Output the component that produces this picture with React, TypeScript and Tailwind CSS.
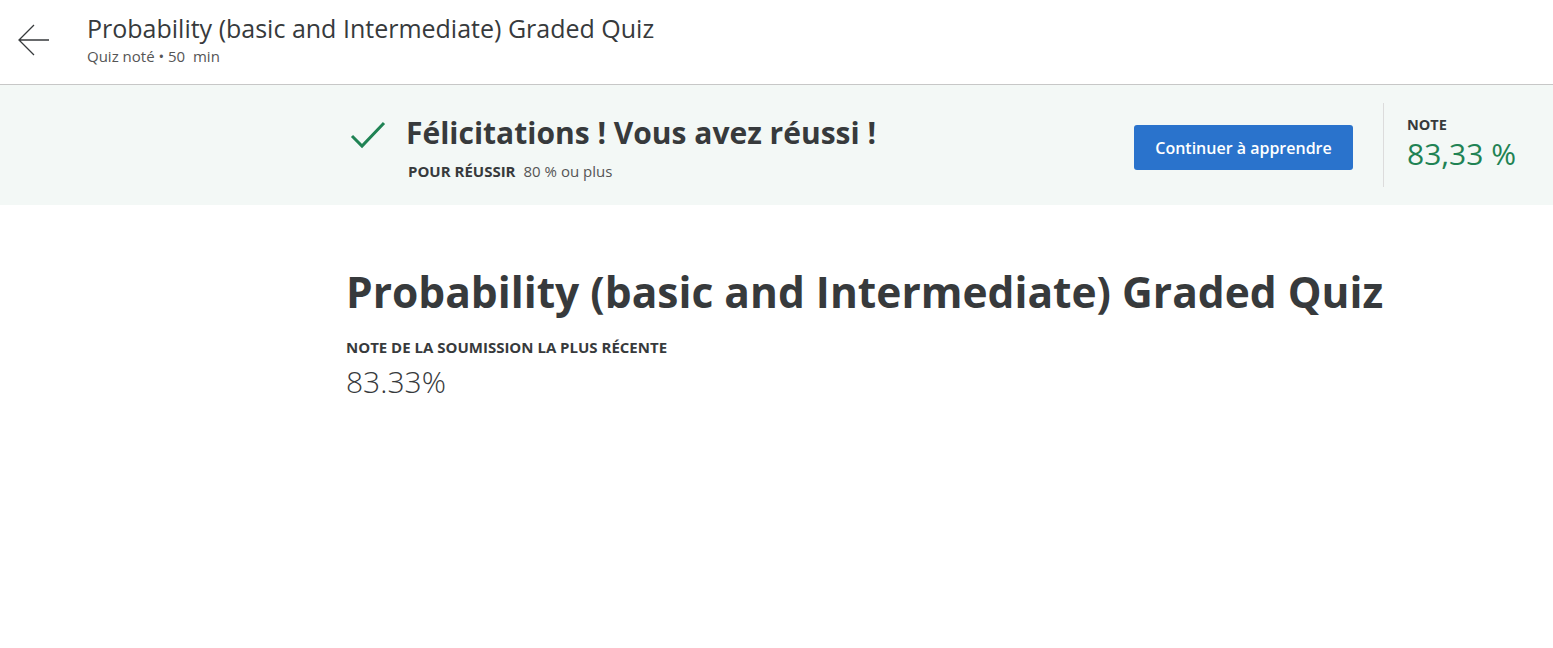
import React from "react";

export default function App() {
  return (
    <div className="min-h-screen bg-white text-[#373a3c]" style={{ fontFamily: '"Open Sans", "Noto Sans", sans-serif' }}>
      <header className="h-[85px] border-b border-[#c7c7c7] flex items-start">
        <div className="w-[87px] pt-[24px] pl-[18px]">
          <svg width="32" height="32" viewBox="0 0 32 32" fill="none" stroke="#373a3c" strokeWidth="1.3">
            <path d="M31 16H2M16 1L1 16l15 15" />
          </svg>
        </div>
        <div className="pt-[10px]">
          <div className="text-[25px] leading-[36px] text-[#373a3c]">Probability (basic and Intermediate) Graded Quiz</div>
          <div className="text-[15px] leading-[20px] text-[#555]">Quiz noté • 50&nbsp; min</div>
        </div>
      </header>
      <section className="h-[120px] bg-[#f3f8f6] pt-[18px]">
        <div className="ml-[350px] flex items-start w-[1166px]">
          <div className="mt-[17px] w-[56px]">
            <svg width="36" height="30" viewBox="0 0 36 30" fill="none" stroke="#1f8354" strokeWidth="3">
              <path d="M2 16l10 10L34 3" />
            </svg>
          </div>
          <div className="flex-1 mt-[10px]">
            <div className="text-[30px] font-bold leading-[40px]">Félicitations ! Vous avez réussi !</div>
            <div className="mt-[8px] pl-[2px] text-[15px] leading-[20px]">
              <span className="font-bold">POUR RÉUSSIR</span>
              <span className="ml-[8px] text-[#555]">80 % ou plus</span>
            </div>
          </div>
          <div className="mt-[22px]">
            <button className="h-[45px] w-[219px] rounded-[3px] bg-[#2a73cc] text-white text-[16px] font-semibold">Continuer à apprendre</button>
          </div>
          <div className="ml-[30px] w-[133px] h-[84px] border-l border-[#dcdcdc] pl-[23px] pt-[14px]">
            <div className="text-[14.5px] font-bold leading-[16px]">NOTE</div>
            <div className="text-[30px] leading-[41px] text-[#1f8354] whitespace-nowrap">83,33 %</div>
          </div>
        </div>
      </section>
      <main className="pl-[346px] pt-[58px]">
        <h1 className="text-[42.5px] font-bold leading-[58px]">Probability (basic and Intermediate) Graded Quiz</h1>
        <div className="mt-[16px] text-[15px] font-bold leading-[20px]">NOTE DE LA SOUMISSION LA PLUS RÉCENTE</div>
        <div className="mt-[7px] text-[30px] font-light leading-[36px]">83.33%</div>
      </main>
    </div>
  );
}
